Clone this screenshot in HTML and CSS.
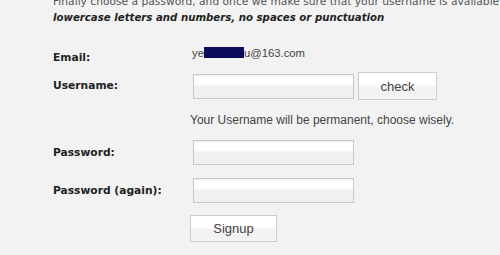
FILE: index.html
```html
<!DOCTYPE html>
<html>
<head>
<meta charset="utf-8">
<link rel="stylesheet" href="styles.css">
</head>
<body>
<div class="page">
  <div class="intro">
    <div class="intro-line">Finally choose a password, and once we make sure that your username is available</div>
    <div class="intro-rule">lowercase letters and numbers, no spaces or punctuation</div>
  </div>
  <div class="row row-email">
    <div class="label label-email">Email:</div>
    <div class="value">ye<span class="redact">xxxxxxx</span>u@163.com</div>
  </div>
  <div class="row row-user">
    <div class="label">Username:</div>
    <input class="field" type="text">
    <button class="btn btn-check" type="button">check</button>
  </div>
  <div class="hint">Your Username will be permanent, choose wisely.</div>
  <div class="row row-pass">
    <div class="label">Password:</div>
    <input class="field" type="password">
  </div>
  <div class="row row-pass2">
    <div class="label">Password (again):</div>
    <input class="field" type="password">
  </div>
  <div class="submit-row">
    <button class="btn btn-signup" type="button">Signup</button>
  </div>
</div>
</body>
</html>
```

FILE: styles.css
```css
html, body {
  margin: 0;
  padding: 0;
  background: #f2f2f2;
  overflow: hidden;
}
.page {
  padding-left: 53px;
  width: 447px;
}
.intro {
  margin-top: -6px;
  font-family: "DejaVu Sans", Verdana, sans-serif;
  font-size: 10.7px;
  line-height: 16px;
  white-space: nowrap;
}
.intro-line {
  color: #555;
}
.intro-rule {
  color: #222;
  font-weight: bold;
  font-style: italic;
  font-size: 10.2px;
}
.row {
  display: flex;
  align-items: center;
}
.label {
  width: 140px;
  flex: none;
  font-family: "DejaVu Sans", Verdana, sans-serif;
  font-weight: bold;
  font-size: 10.7px;
  line-height: 16px;
  color: #222;
}
.row-email {
  margin-top: 19px;
  align-items: flex-start;
}
.label-email {
  padding-top: 5px;
}
.value {
  margin-left: -1px;
  font-family: "Liberation Sans", Arial, sans-serif;
  font-size: 11.3px;
  line-height: 16px;
  color: #444;
}
.redact {
  display: inline-block;
  width: 40px;
  height: 11px;
  background: #0b0b5c;
  color: transparent;
  vertical-align: -1px;
  overflow: hidden;
  line-height: 11px;
}
.row-user {
  margin-top: 6px;
  height: 28px;
}
.field {
  box-sizing: border-box;
  width: 161px;
  height: 25px;
  margin: 0;
  padding: 0 4px;
  border: 1px solid #c9c9c9;
  background: linear-gradient(#e9e9e9 0, #ffffff 2px, #ffffff 42%, #f0f0f0 48%, #f0f0f0 100%);
  outline: none;
}
.btn {
  box-sizing: border-box;
  margin: 0;
  padding: 0;
  border: 1px solid #cdcdcd;
  background: linear-gradient(#ffffff 0, #ffffff 45%, #f3f3f3 55%, #f3f3f3 100%);
  font-family: "Liberation Sans", Arial, sans-serif;
  font-size: 13px;
  color: #444;
}
.btn-check {
  margin-left: 4px;
  width: 79px;
  height: 28px;
}
.hint {
  margin-top: 12px;
  padding-left: 137px;
  font-family: "Liberation Sans", Arial, sans-serif;
  font-size: 12px;
  line-height: 16px;
  color: #444;
}
.row-pass {
  margin-top: 12px;
}
.row-pass2 {
  margin-top: 13px;
}
.submit-row {
  margin-top: 12px;
  padding-left: 137px;
  display: flex;
}
.btn-signup {
  width: 87px;
  height: 27px;
}
```
